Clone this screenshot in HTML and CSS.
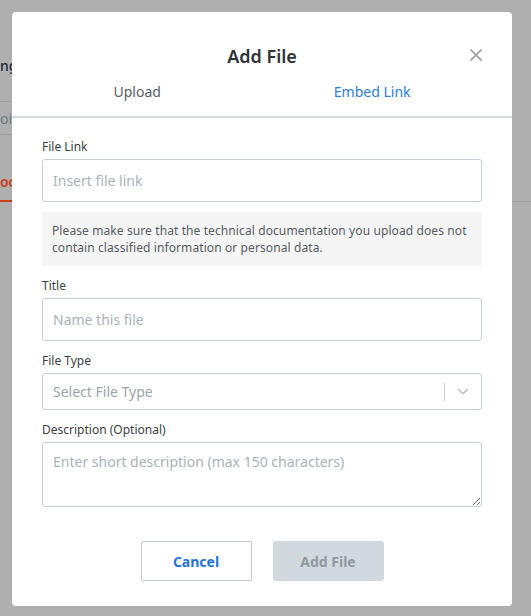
FILE: index.html
```
<!DOCTYPE html>
<html lang="en">
<head>
<meta charset="utf-8">
<title>Add File</title>
<link rel="stylesheet" href="styles.css">
</head>
<body>
<div class="page">
  <div class="page-head"><span class="crumb">ng</span></div>
  <div class="page-bar"><span class="bar-text">oi</span></div>
  <div class="page-tabs"><span class="page-tab">oc</span></div>
</div>

<div class="modal" role="dialog" aria-labelledby="modal-title">
  <button class="close" aria-label="Close">
    <svg width="12" height="12" viewBox="0 0 12 12"><path d="M1 1 L11 11 M11 1 L1 11" stroke="#a6a6a6" stroke-width="1.8" stroke-linecap="square" fill="none"/></svg>
  </button>
  <div class="modal-head">
    <h2 id="modal-title" class="modal-title">Add File</h2>
    <div class="tabs">
      <div class="tab">Upload</div>
      <div class="tab tab-active">Embed Link</div>
    </div>
  </div>
  <div class="modal-body">
    <div class="field field-first">
      <label class="label">File Link</label>
      <input class="input" type="text" placeholder="Insert file link">
    </div>
    <div class="notice">Please make sure that the technical documentation you upload does not contain classified information or personal data.</div>
    <div class="field">
      <label class="label">Title</label>
      <input class="input" type="text" placeholder="Name this file">
    </div>
    <div class="field">
      <label class="label">File Type</label>
      <div class="select">
        <span class="select-value">Select File Type</span>
        <span class="select-sep"></span>
        <span class="select-arrow">
          <svg width="12" height="7" viewBox="0 0 12 7"><path d="M1 1 L6 5.5 L11 1" stroke="#b5bec4" stroke-width="1.5" fill="none"/></svg>
        </span>
      </div>
    </div>
    <div class="field">
      <label class="label">Description (Optional)</label>
      <textarea class="textarea" placeholder="Enter short description (max 150 characters)"></textarea>
    </div>
    <div class="actions">
      <button class="btn btn-cancel">Cancel</button>
      <button class="btn btn-primary" disabled>Add File</button>
    </div>
  </div>
</div>
</body>
</html>
```
FILE: styles.css
```
html, body {
  margin: 0;
  padding: 0;
}
body {
  background: #afafaf;
  font-family: "Noto Sans", "Open Sans", "Liberation Sans", sans-serif;
  width: 531px;
  height: 616px;
  overflow: hidden;
  position: relative;
}
.page {
  display: flex;
  flex-direction: column;
}
.page-head {
  height: 101px;
  display: flex;
  align-items: center;
  padding-top: 30px;
  box-sizing: border-box;
}
.crumb {
  font-size: 14px;
  color: #1a2746;
  font-weight: 500;
}
.page-bar {
  width: 300px;
  height: 34px;
  box-sizing: border-box;
  border-top: 1px solid #9c9c9c;
  border-bottom: 1px solid #9c9c9c;
  display: flex;
  align-items: center;
}
.bar-text {
  font-size: 14px;
  color: #6a7a86;
}
.page-tabs {
  height: 67px;
  box-sizing: border-box;
  display: flex;
  align-items: flex-end;
  border-bottom: 1px solid #a2a2a2;
}
.page-tab {
  font-size: 14px;
  font-weight: 600;
  color: #c63a1c;
  padding-bottom: 8px;
  margin-bottom: -1px;
  border-bottom: 2px solid #c8401f;
  line-height: 20px;
  letter-spacing: -0.3px;
}

.modal {
  position: absolute;
  left: 12px;
  top: 12px;
  width: 500px;
  background: #fff;
  border-radius: 4px;
  box-sizing: border-box;
}
.close {
  position: absolute;
  top: 37px;
  right: 30px;
  width: 12px;
  height: 12px;
  padding: 0;
  border: 0;
  background: none;
  display: flex;
}
.modal-head {
  padding-top: 32px;
  border-bottom: 2px solid #d3d9dc;
}
.modal-title {
  margin: 0;
  text-align: center;
  font-size: 18px;
  line-height: 24px;
  font-weight: 600;
  color: #2e3336;
}
.tabs {
  display: flex;
  margin-top: 14px;
  padding: 0 15px;
}
.tab {
  flex: 1 1 auto;
  text-align: center;
  font-size: 14px;
  line-height: 20px;
  padding-bottom: 14px;
  color: #596168;
}
.tab-active {
  color: #2b7de0;
}
.modal-body {
  padding: 20px 30px 25px;
  display: flex;
  flex-direction: column;
}
.field {
  display: flex;
  flex-direction: column;
  margin-top: 11px;
}
.field-first {
  margin-top: 0;
}
.label {
  font-size: 12px;
  line-height: 17px;
  color: #3a3f43;
  margin-bottom: 4px;
}
.input, .textarea, .select {
  box-sizing: border-box;
  width: 100%;
  border: 1px solid #c8d0d5;
  border-radius: 3px;
  font-family: inherit;
  font-size: 14px;
  color: #333;
  background: #fff;
  margin: 0;
}
.input {
  height: 43px;
  padding: 0 10px;
}
.input::placeholder, .textarea::placeholder {
  color: #a9b3ba;
}
.notice {
  margin-top: 10px;
  background: #f5f5f5;
  padding: 10px 10px;
  font-size: 12px;
  line-height: 17px;
  letter-spacing: 0.1px;
  color: #555c62;
}
.select {
  height: 37px;
  display: flex;
  align-items: center;
  padding-left: 10px;
}
.select-value {
  flex: 1;
  color: #9aa5ac;
}
.select-sep {
  width: 1px;
  height: 18px;
  background: #c8cfd4;
}
.select-arrow {
  width: 36px;
  display: flex;
  justify-content: center;
  align-items: center;
}
.textarea {
  height: 65px;
  padding: 9px 10px;
  line-height: 20px;
  resize: vertical;
  display: block;
}
.actions {
  display: flex;
  justify-content: center;
  gap: 21px;
  margin-top: 34px;
}
.btn {
  width: 111px;
  height: 40px;
  font-family: inherit;
  font-size: 14px;
  font-weight: 700;
  border-radius: 3px;
  margin: 0;
}
.btn-cancel {
  background: #fff;
  border: 1px solid #c3cbd0;
  color: #1f74e0;
  border-radius: 2px;
}
.btn-primary {
  background: #d1d9de;
  border: 0;
  color: #8f9aa2;
}
```
